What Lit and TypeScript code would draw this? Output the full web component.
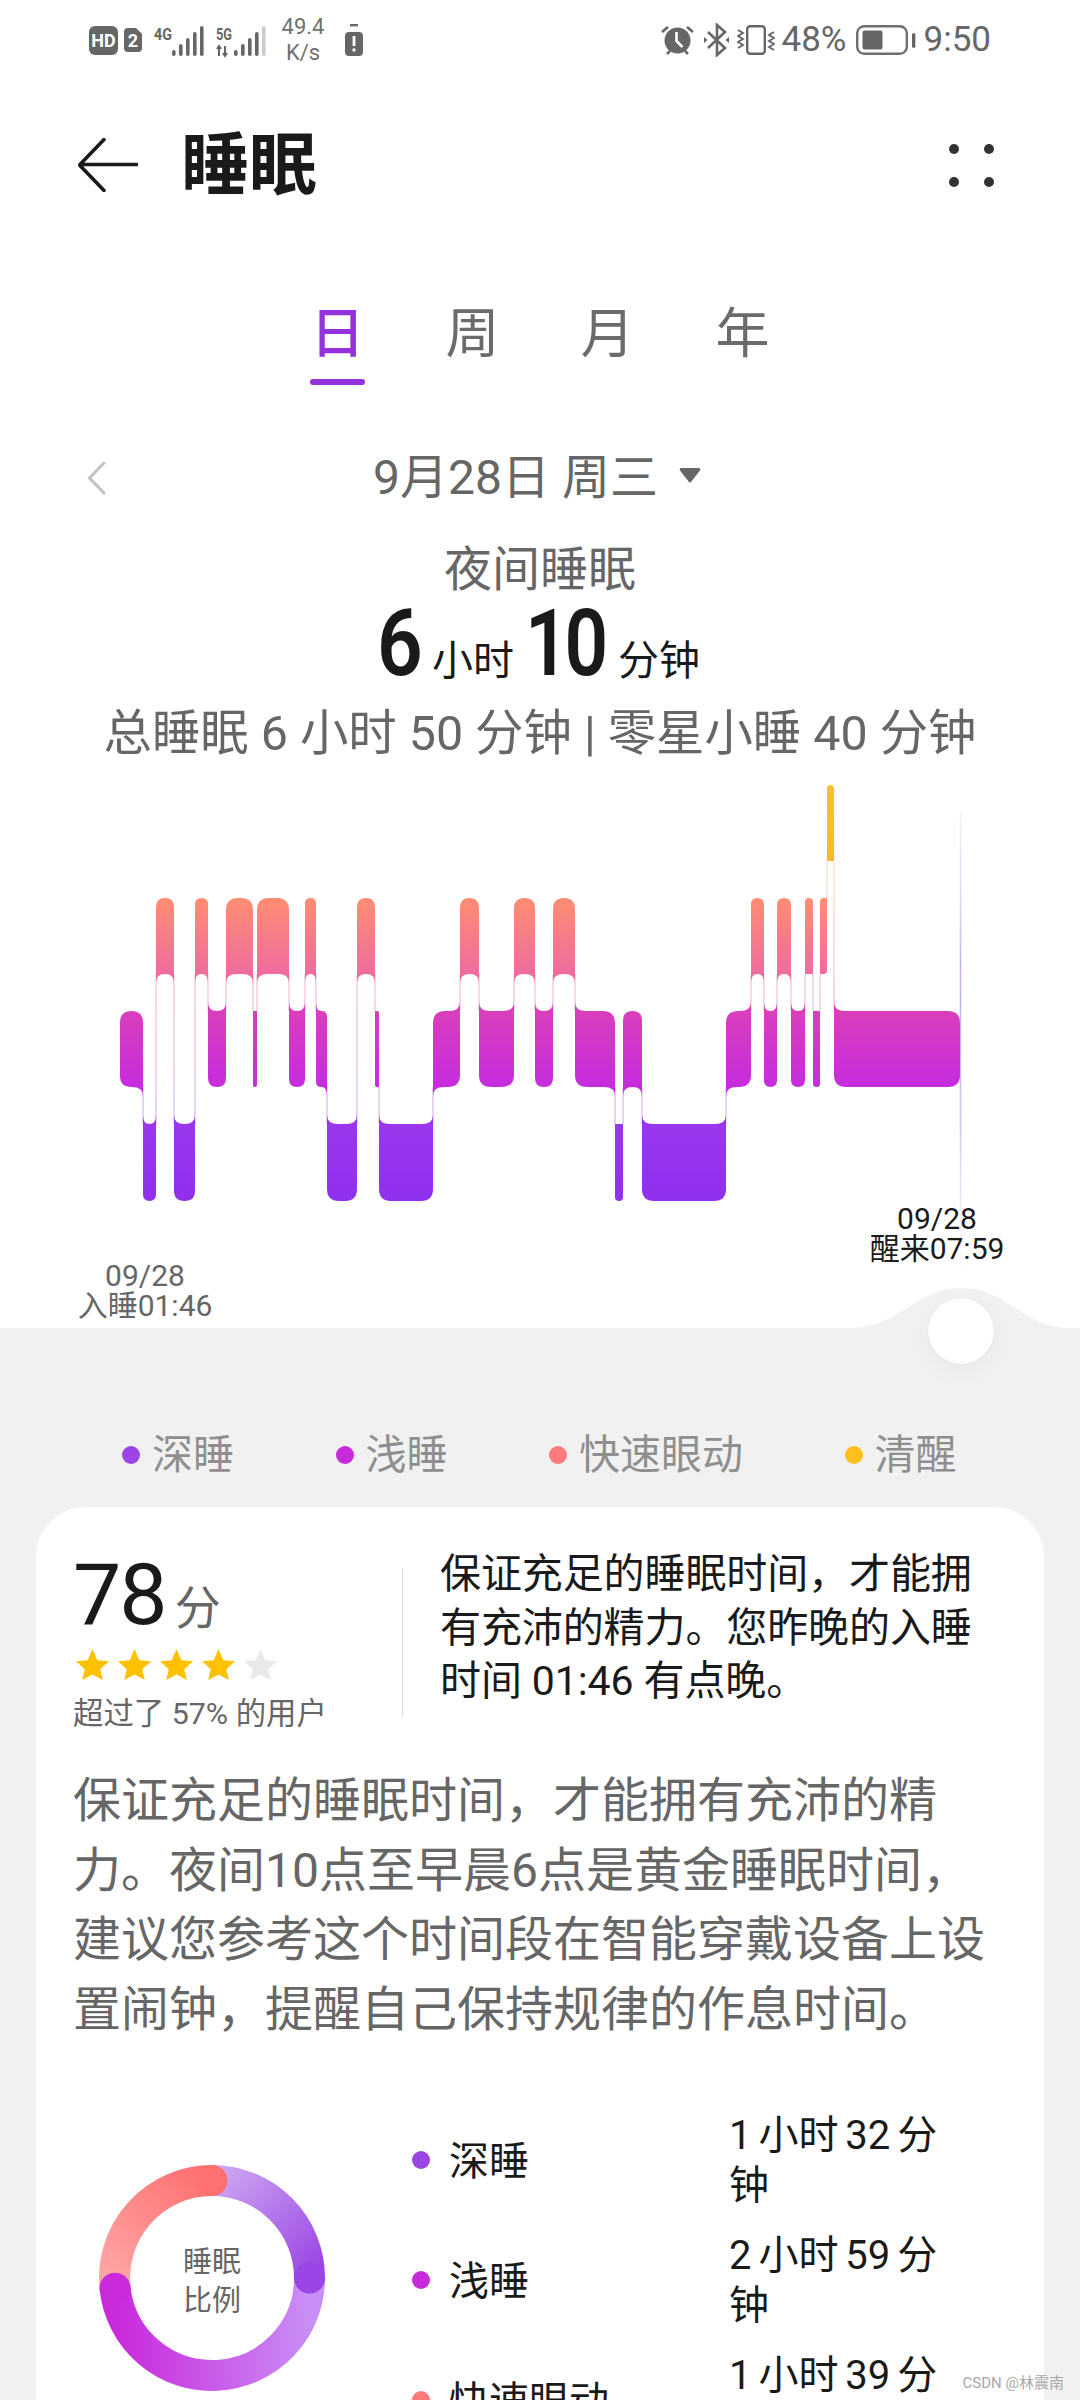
import { LitElement, css, html, svg } from "lit";
import { customElement } from "lit/decorators.js";

type Level = "awake" | "rem" | "light" | "deep";

// top / bottom of each sleep stage band, page coordinates
const BANDS: Record<Level, [number, number]> = {
  awake: [785, 861],
  rem: [898, 974],
  light: [1011, 1087],
  deep: [1124, 1201],
};

const SEGMENTS: [Level, number, number][] = [
  ["light", 120, 143], ["deep", 143, 156], ["rem", 156, 174], ["deep", 174, 195],
  ["rem", 195, 208], ["light", 208, 226], ["rem", 226, 253], ["light", 253, 257],
  ["rem", 257, 289], ["light", 289, 305], ["rem", 305, 316], ["light", 316, 327],
  ["deep", 327, 357], ["rem", 357, 375], ["light", 375, 379], ["deep", 379, 433],
  ["light", 433, 460], ["rem", 460, 479], ["light", 479, 514], ["rem", 514, 535],
  ["light", 535, 553], ["rem", 553, 575], ["light", 575, 615], ["deep", 615, 623],
  ["light", 623, 642], ["deep", 642, 726], ["light", 726, 751], ["rem", 751, 764],
  ["light", 764, 777], ["rem", 777, 791], ["light", 791, 805], ["rem", 805, 813],
  ["light", 813, 820], ["rem", 820, 827], ["awake", 827, 834], ["light", 834, 960],
];

const CHART_TOP = 764;
const CHART_H = 564;

function segmentPath(i: number) {
  const [lvl, x0, x1] = SEGMENTS[i];
  const [top, bot] = BANDS[lvl];
  const w = x1 - x0;
  const prev = SEGMENTS[i - 1] ? BANDS[SEGMENTS[i - 1][0]][0] : null;
  const next = SEGMENTS[i + 1] ? BANDS[SEGMENTS[i + 1][0]][0] : null;
  const r = Math.min(12, w / 2);
  const ex = w < 10 ? 0 : Math.min(11, w / 2);
  const fl = w < 10 ? 0 : 9;
  let d = "";
  // top left, top right, bottom right, bottom left: flare towards a neighbour on the far side
  if (prev !== null && prev < top) d += `M${x0} ${top - fl}Q${x0} ${top} ${x0 + ex} ${top}`;
  else d += `M${x0} ${top + r}Q${x0} ${top} ${x0 + r} ${top}`;
  if (next !== null && next < top) d += `L${x1 - ex} ${top}Q${x1} ${top} ${x1} ${top - fl}`;
  else d += `L${x1 - r} ${top}Q${x1} ${top} ${x1} ${top + r}`;
  if (next !== null && next > top) d += `L${x1} ${bot + fl}Q${x1} ${bot} ${x1 - ex} ${bot}`;
  else d += `L${x1} ${bot - r}Q${x1} ${bot} ${x1 - r} ${bot}`;
  if (prev !== null && prev > top) d += `L${x0 + ex} ${bot}Q${x0} ${bot} ${x0} ${bot + fl}`;
  else d += `L${x0 + r} ${bot}Q${x0} ${bot} ${x0} ${bot - r}`;
  return d + "Z";
}

function connectors() {
  return SEGMENTS.slice(1).map((seg, i) => {
    const a = BANDS[SEGMENTS[i][0]];
    const b = BANDS[seg[0]];
    const upper = a[0] < b[0] ? a : b;
    const lower = a[0] < b[0] ? b : a;
    return svg`<line x1=${seg[1]} x2=${seg[1]} y1=${upper[1]} y2=${lower[0]} stroke="url(#link)" stroke-width="1.1" />`;
  });
}

const CX = 113;
const CY = 113;
const RING = 97.5;

function polar(deg: number) {
  const a = (deg * Math.PI) / 180;
  return [CX + RING * Math.sin(a), CY - RING * Math.cos(a)];
}

const RING_PARTS = [
  { id: "rDeep", from: 0, to: 90, a: "#cda6f2", b: "#9a45e4" },
  { id: "rLight", from: 90, to: 264, a: "#c98ff6", b: "#c92adc" },
  { id: "rRem", from: 264, to: 360, a: "#ffa6a6", b: "#ff7070" },
];

function star(on: boolean) {
  return html`<svg class="star" viewBox="0 0 34 32">
    <path d="M17 0l5 11.5 12 1.2-9 8.3 2.6 11L17 26.2 6.4 32 9 21 0 12.7l12-1.2z" fill=${on ? "#ffc000" : "#e9e9e9"} />
  </svg>`;
}

function bars(total: number, lit: number) {
  return [0, 1, 2, 3, 4].map((i) => {
    const h = 6 + i * 6;
    const x = total + i * 7;
    return svg`<rect x=${x} y=${30 - h} width="3.6" height=${h} rx="1.8" fill=${i < lit ? "#666" : "#ccc"} />`;
  });
}

@customElement("app-root")
export class AppRoot extends LitElement {
  static styles = css`
    :host {
      display: block;
      width: 1080px;
      height: 2400px;
      overflow: hidden;
      position: relative;
      background: #fff;
      font-family: Roboto, "Noto Sans CJK SC", sans-serif;
      color: #666;
    }
    svg {
      display: block;
      flex: none;
    }
    .status {
      height: 80px;
      padding: 0 89px 0 89px;
      display: flex;
      justify-content: space-between;
      align-items: center;
    }
    .status-group {
      display: flex;
      align-items: center;
    }
    .hd {
      width: 29px;
      height: 29px;
      border-radius: 6px;
      background: #666;
      color: #fff;
      font-size: 18px;
      font-weight: 700;
      line-height: 29px;
      text-align: center;
      margin: 0 6px 0 0;
    }
    .speed {
      width: 50px;
      margin: 0 17px -2px -1px;
      text-align: center;
      font-size: 22px;
      line-height: 26px;
      color: #707070;
      position: relative;
      top: -1px;
    }
    .status-text {
      font-size: 35px;
      line-height: 40px;
      color: #666;
    }
    .appbar {
      height: 170px;
      padding: 0 86px 0 78px;
      display: flex;
      align-items: center;
    }
    .appbar h1 {
      margin: 2px 0 0 43px;
      font-size: 68px;
      line-height: 80px;
      font-weight: 700;
      color: #1a1a1a;
      flex: 1;
    }
    .more {
      display: grid;
      grid-template-columns: 10px 10px;
      gap: 23px 25px;
    }
    .more span {
      width: 10px;
      height: 10px;
      border-radius: 50%;
      background: #333;
    }
    .tabs {
      display: flex;
      justify-content: center;
      padding-top: 55px;
    }
    .tab {
      width: 135px;
      display: flex;
      flex-direction: column;
      align-items: center;
      font-size: 54px;
      line-height: 60px;
      color: #6b6b6b;
    }
    .tab.on {
      color: #9331dd;
      font-weight: 500;
    }
    .tab i {
      display: block;
      width: 55px;
      height: 6px;
      margin-top: 14px;
      border-radius: 3px;
    }
    .tab.on i {
      background: #9331dd;
    }
    .date {
      height: 60px;
      margin-top: 63px;
      padding: 0 93px 0 87px;
      display: grid;
      grid-template-columns: 1fr auto 1fr;
      align-items: center;
      font-size: 48px;
      line-height: 60px;
    }
    .date-label {
      display: flex;
      align-items: center;
    }
    .date-label svg {
      margin-left: 21px;
      margin-top: -7px;
    }
    .summary {
      text-align: center;
      font-size: 48px;
      line-height: 60px;
    }
    .night {
      margin-top: 32px;
    }
    .overall {
      font-size: 48.4px;
    }
    .total {
      height: 104px;
      line-height: 90px;
      color: #1a1a1a;
      font-size: 41px;
      display: flex;
      justify-content: center;
      align-items: baseline;
    }
    .total span {
      position: relative;
      top: -1px;
    }
    .total b {
      display: block;
      font-size: 92px;
      font-weight: 600;
      white-space: nowrap;
      position: relative;
      top: -1px;
      transform: translateX(-3px) scaleX(0.87);
      transform-origin: left;
    }
    .total b.hours {
      width: 40px;
      margin-right: 12px;
    }
    .total b.minutes {
      width: 75px;
      margin: 0 15px 0 14px;
      letter-spacing: -5px;
      transform: translateX(-3px) scaleX(0.83);
    }
    .chart {
      position: relative;
      height: ${CHART_H}px;
    }
    .chart-label {
      position: absolute;
      width: 200px;
      text-align: center;
      font-size: 30px;
      line-height: 30px;
    }
    .asleep {
      left: 45px;
      top: 497px;
    }
    .woke {
      left: 837px;
      top: 440px;
      color: #1a1a1a;
    }
    .lower {
      position: relative;
      height: 1072px;
      background: #f1f1f1;
    }
    .bump {
      position: absolute;
      left: 0;
      top: -40px;
    }
    .knob {
      position: absolute;
      left: 928px;
      top: -30px;
      width: 66px;
      height: 66px;
      border-radius: 50%;
      background: #fff;
      box-shadow: 0 8px 26px rgba(0, 0, 0, 0.04), 0 0 1px rgba(0, 0, 0, 0.12);
    }
    .legend {
      position: relative;
      display: flex;
      gap: 101.5px;
      padding: 99px 0 0 122px;
      height: 56px;
      font-size: 41px;
      line-height: 56px;
      color: #8f8f8f;
    }
    .legend-item {
      display: flex;
      align-items: center;
      gap: 12px;
    }
    .dot {
      width: 18px;
      height: 18px;
      border-radius: 50%;
      flex: none;
    }
    .card {
      margin: 24px 36px 0;
      padding: 41px 0 0 37px;
      height: 899px;
      background: #fff;
      border-radius: 50px 50px 0 0;
    }
    .top {
      display: flex;
      height: 218px;
    }
    .score {
      width: 329px;
    }
    .score-num {
      display: flex;
      align-items: baseline;
      height: 101px;
      font-size: 46px;
      line-height: 94px;
    }
    .score-num b {
      font-size: 86px;
      font-weight: 400;
      color: #1a1a1a;
      letter-spacing: -2px;
      margin-right: 9px;
    }
    .stars {
      display: flex;
      gap: 9px;
      margin-left: 3px;
      height: 30px;
    }
    .star {
      width: 33px;
      height: 31px;
    }
    .beat {
      margin-top: 17px;
      font-size: 30.4px;
      line-height: 36px;
    }
    .divider {
      width: 1px;
      height: 149px;
      margin: 20px 37px 0 0;
      background: #dcdcdc;
    }
    .tip {
      width: 540px;
      font-size: 41px;
      line-height: 53.5px;
      letter-spacing: -0.1px;
      color: #1a1a1a;
    }
    .advice {
      width: 920px;
      margin: 0;
      font-size: 48px;
      line-height: 69.5px;
      color: #666;
    }
    .ratio {
      display: flex;
      align-items: center;
      margin-top: 68px;
      height: 340px;
    }
    .donut {
      margin: -9px 87px 0 26px;
    }
    .rows {
      display: grid;
      grid-template-columns: 18px 299px 225px;
      grid-auto-rows: 100px;
      row-gap: 20px;
      align-items: center;
      font-size: 40px;
      color: #1a1a1a;
      position: relative;
      top: -1px;
    }
    .rows .dot {
      margin-top: -2px;
    }
    .rows .name {
      padding-left: 19px;
      margin-top: -7px;
    }
    .rows .value {
      line-height: 50px;
      word-spacing: -3px;
    }
    .mark {
      position: absolute;
      right: 16px;
      top: 2372px;
      font-size: 15px;
      line-height: 22px;
      color: #a8a8a8;
    }
  `;

  chart() {
    return html`<svg width="1080" height=${CHART_H} viewBox="0 ${CHART_TOP} 1080 ${CHART_H}">
      <defs>
        <linearGradient id="awake" gradientUnits="userSpaceOnUse" x1="0" x2="0" y1="785" y2="861">
          <stop offset="0" stop-color="#ffc02c" /><stop offset="1" stop-color="#fbb824" />
        </linearGradient>
        <linearGradient id="rem" gradientUnits="userSpaceOnUse" x1="0" x2="0" y1="898" y2="974">
          <stop offset="0" stop-color="#fe8d72" /><stop offset="1" stop-color="#ef6c9e" />
        </linearGradient>
        <linearGradient id="light" gradientUnits="userSpaceOnUse" x1="0" x2="0" y1="1011" y2="1087">
          <stop offset="0" stop-color="#d93fbb" /><stop offset="1" stop-color="#c62cde" />
        </linearGradient>
        <linearGradient id="deep" gradientUnits="userSpaceOnUse" x1="0" x2="0" y1="1124" y2="1201">
          <stop offset="0" stop-color="#9b36ee" /><stop offset="1" stop-color="#8f30ee" />
        </linearGradient>
        <linearGradient id="link" gradientUnits="userSpaceOnUse" x1="0" x2="0" y1="861" y2="1124">
          <stop offset="0" stop-color="#fbdcb8" />
          <stop offset="0.45" stop-color="#f0bcd4" />
          <stop offset="1" stop-color="#d4acf0" />
        </linearGradient>
        <linearGradient id="marker" gradientUnits="userSpaceOnUse" x1="0" x2="0" y1="812" y2="1270">
          <stop offset="0" stop-color="#dcc9f5" stop-opacity="0.3" />
          <stop offset="0.35" stop-color="#c9aaf0" />
          <stop offset="0.7" stop-color="#d6c2f3" />
          <stop offset="1" stop-color="#e6daf8" stop-opacity="0.1" />
        </linearGradient>
      </defs>
      <line x1="960.5" x2="960.5" y1="812" y2="1270" stroke="url(#marker)" stroke-width="1.5" />
      ${connectors()}
      ${SEGMENTS.map((s, i) => svg`<path d=${segmentPath(i)} fill="url(#${s[0]})" />`)}
    </svg>`;
  }

  donut() {
    return html`<svg class="donut" width="226" height="226" viewBox="0 0 226 226">
      <defs>
        ${RING_PARTS.map((p) => {
          const [x1, y1] = polar(p.from);
          const [x2, y2] = polar(p.to);
          return svg`<linearGradient id=${p.id} gradientUnits="userSpaceOnUse" x1=${x1} y1=${y1} x2=${x2} y2=${y2}>
            <stop offset="0" stop-color=${p.a} /><stop offset="1" stop-color=${p.b} />
          </linearGradient>`;
        })}
      </defs>
      ${RING_PARTS.map((p) => {
        const [x1, y1] = polar(p.from);
        const [x2, y2] = polar(p.to);
        const large = p.to - p.from > 180 ? 1 : 0;
        return svg`<path d="M${x1} ${y1}A${RING} ${RING} 0 ${large} 1 ${x2} ${y2}" fill="none" stroke="url(#${p.id})" stroke-width="31" />`;
      })}
      ${RING_PARTS.map((p) => {
        const [x, y] = polar(p.to);
        return svg`<circle cx=${x} cy=${y} r="15.5" fill=${p.b} />`;
      })}
      <text x="113" y="107" text-anchor="middle" font-size="29" fill="#666">睡眠</text>
      <text x="113" y="146" text-anchor="middle" font-size="29" fill="#666">比例</text>
    </svg>`;
  }

  statusLeft() {
    return html`<div class="status-group">
      <div class="hd">HD</div>
      <svg width="18" height="24" viewBox="0 0 18 24" style="margin-right:12px">
        <path d="M4 0h8l6 6v14a4 4 0 0 1-4 4H4a4 4 0 0 1-4-4V4a4 4 0 0 1 4-4z" fill="#666" />
        <text x="9" y="18.5" text-anchor="middle" font-size="18" font-weight="700" fill="#fff">2</text>
      </svg>
      <svg width="50" height="40" viewBox="0 -4 50 40" style="margin-right:12px;margin-bottom:-4px">
        <text x="0" y="14" font-size="17" font-weight="700" fill="#666" textLength="18" lengthAdjust="spacingAndGlyphs">4G</text>
        ${bars(18, 5)}
      </svg>
      <svg width="56" height="40" viewBox="0 -4 56 40" style="margin-right:7px;margin-bottom:-4px">
        <text x="0" y="14" font-size="17" font-weight="700" fill="#666" textLength="16" lengthAdjust="spacingAndGlyphs">5G</text>
        <path d="M3 30V20M1 23l2-3 2 3M9 20v10M7 27l2 3 2-3" stroke="#666" stroke-width="2" fill="none" />
        ${bars(18, 4)}
      </svg>
      <div class="speed">49.4<br />K/s</div>
      <svg width="18" height="32" viewBox="0 0 18 32">
        <rect x="5" y="0" width="8" height="2.4" fill="#666" />
        <rect x="0" y="8" width="18" height="24" rx="4" fill="#666" />
        <rect x="7.6" y="12" width="2.8" height="10" fill="#fff" />
        <rect x="7.6" y="24.5" width="2.8" height="3" fill="#fff" />
      </svg>
    </div>`;
  }

  statusRight() {
    return html`<div class="status-group">
      <svg width="33" height="30" viewBox="0 0 33 30" style="margin-right:10px">
        <circle cx="16.5" cy="15.5" r="13" fill="#666" />
        <path d="M15.5 7v9l6 6" stroke="#fff" stroke-width="2.6" fill="none" />
        <path d="M1 7l6-5M32 7l-6-5M6 29l3-3M27 29l-3-3" stroke="#666" stroke-width="2.6" fill="none" />
      </svg>
      <svg width="25" height="34" viewBox="0 0 25 34" style="margin-right:8px">
        <path d="M4 9l17 16-8 7V2l8 7L4 25" stroke="#666" stroke-width="2.6" fill="none" />
        <path d="M0 14l3.5 3L0 20zM25 14l-3.5 3 3.5 3z" fill="#666" />
      </svg>
      <svg width="38" height="30" viewBox="0 0 38 30" style="margin-right:7px">
        <rect x="10.2" y="1.2" width="17.6" height="27.6" rx="3" stroke="#666" stroke-width="2.4" fill="none" />
        <path d="M1 5l5 3-5 3 5 3-5 3 5 3-5 3M37 7l-5 3 5 3-5 3 5 3-5 3 5 3" stroke="#666" stroke-width="1.9" fill="none" />
      </svg>
      <div class="status-text" style="margin-right:9px">48%</div>
      <svg width="60" height="30" viewBox="0 0 60 30" style="margin-right:8px">
        <rect x="1.2" y="1.2" width="49.6" height="27.6" rx="7" stroke="#6f6f6f" stroke-width="2.4" fill="none" />
        <rect x="6.5" y="5.5" width="20" height="19" rx="2" fill="#666" />
        <rect x="56" y="8" width="3.4" height="15" rx="1.7" fill="#666" />
      </svg>
      <div class="status-text">9:50</div>
    </div>`;
  }

  render() {
    const legend = [
      ["深睡", "#9b45e4"],
      ["浅睡", "#c92adc"],
      ["快速眼动", "#ff7a7a"],
      ["清醒", "#ffbf1f"],
    ];
    const rows = [
      ["深睡", "#9b45e4", "1 小时 32 分钟"],
      ["浅睡", "#c92adc", "2 小时 59 分钟"],
      ["快速眼动", "#ff7a7a", "1 小时 39 分钟"],
    ];
    return html`
      <div class="status">${this.statusLeft()} ${this.statusRight()}</div>

      <div class="appbar">
        <svg width="60" height="54" viewBox="0 0 60 54">
          <path d="M26 1.5L2 26.5h57M2 27.5l24 25" stroke="#1a1a1a" stroke-width="3.6" fill="none" stroke-linecap="round" stroke-linejoin="round" />
        </svg>
        <h1>睡眠</h1>
        <div class="more"><span></span><span></span><span></span><span></span></div>
      </div>

      <div class="tabs">
        ${["日", "周", "月", "年"].map(
          (t, i) => html`<div class="tab ${i === 0 ? "on" : ""}">${t}<i></i></div>`
        )}
      </div>

      <div class="date">
        <svg width="19" height="34" viewBox="0 0 19 34">
          <path d="M17 2L2.5 17 17 32" stroke="#c2c2c2" stroke-width="3" fill="none" stroke-linecap="round" />
        </svg>
        <div class="date-label">
          9月28日 周三
          <svg width="22" height="16" viewBox="0 0 22 16"><path d="M2 1h18a1.5 1.5 0 0 1 1 2.4l-8.8 11.4a1.5 1.5 0 0 1-2.4 0L1 3.4A1.5 1.5 0 0 1 2 1z" fill="#666" /></svg>
        </div>
        <span></span>
      </div>

      <div class="summary">
        <div class="night">夜间睡眠</div>
        <div class="total"><b class="hours">6</b><span>小时</span><b class="minutes">10</b><span>分钟</span></div>
        <div class="overall">总睡眠 6 小时 50 分钟 | 零星小睡 40 分钟</div>
      </div>

      <div class="chart">
        ${this.chart()}
        <div class="chart-label asleep">09/28<br />入睡01:46</div>
        <div class="chart-label woke">09/28<br />醒来07:59</div>
      </div>

      <div class="lower">
        <svg class="bump" width="1080" height="40" viewBox="0 1288 1080 40">
          <path d="M850 1328C900 1328 915 1288 961 1288C1007 1288 1022 1328 1072 1328Z" fill="#f1f1f1" />
        </svg>
        <div class="knob"></div>

        <div class="legend">
          ${legend.map(
            ([name, color]) => html`<div class="legend-item"><span class="dot" style="background:${color}"></span>${name}</div>`
          )}
        </div>

        <div class="card">
          <div class="top">
            <div class="score">
              <div class="score-num"><b>78</b>分</div>
              <div class="stars">${[1, 1, 1, 1, 0].map((s) => star(!!s))}</div>
              <div class="beat">超过了 57% 的用户</div>
            </div>
            <div class="divider"></div>
            <div class="tip">保证充足的睡眠时间，才能拥有充沛的精力。您昨晚的入睡时间 01:46 有点晚。</div>
          </div>
          <p class="advice">保证充足的睡眠时间，才能拥有充沛的精力。夜间10点至早晨6点是黄金睡眠时间，建议您参考这个时间段在智能穿戴设备上设置闹钟，提醒自己保持规律的作息时间。</p>
          <div class="ratio">
            ${this.donut()}
            <div class="rows">
              ${rows.map(
                ([name, color, value]) => html`<span class="dot" style="background:${color}"></span>
                  <span class="name">${name}</span>
                  <span class="value">${value}</span>`
              )}
            </div>
          </div>
        </div>
      </div>

      <div class="mark">CSDN @林震南</div>
    `;
  }
}
